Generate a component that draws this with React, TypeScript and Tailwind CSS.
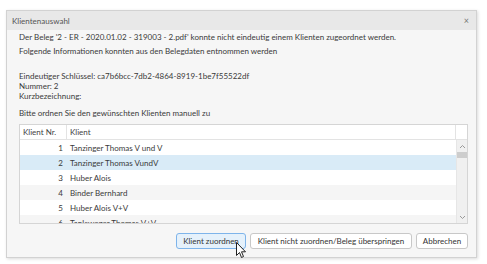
import React from 'react';

const rows = [
  { nr: 1, name: 'Tanzinger Thomas V und V', bg: 'bg-white' },
  { nr: 2, name: 'Tanzinger Thomas VundV', bg: 'bg-[#d9ebf7]' },
  { nr: 3, name: 'Huber Alois', bg: 'bg-white' },
  { nr: 4, name: 'Binder Bernhard', bg: 'bg-[#f5f5f5]' },
  { nr: 5, name: 'Huber Alois V+V', bg: 'bg-white' },
  { nr: 6, name: 'Tanlcweger Thomas V+V', bg: 'bg-[#f5f5f5]' },
];

const App: React.FC = () => {
  return (
    <div className="relative w-[487px] h-[264px] bg-white overflow-hidden font-['Lato',sans-serif] text-[8px] text-[#3a3a3a]">
      <div className="absolute left-[6px] top-[10px] w-[471px] h-[248px] flex flex-col border border-[#d2d2d2] bg-[#f6f6f6] shadow-[1px_1px_3px_rgba(0,0,0,0.15)]">
        {/* title bar */}
        <div className="h-[19px] shrink-0 flex items-center justify-between bg-[#e8e8e8] pl-[5px] pr-[7px] text-[#555]">
          <span>Klientenauswahl</span>
          <span className="text-[9px] text-[#777] leading-none">×</span>
        </div>

        <div className="flex flex-col pl-[12px] pr-[8px] leading-[10px]">
          <div className="mt-[2px] h-[10px]">Der Beleg '2 - ER - 2020.01.02 - 319003 - 2.pdf' konnte nicht eindeutig einem Klienten zugeordnet werden.</div>
          <div className="mt-[4px] h-[10px]">Folgende Informationen konnten aus den Belegdaten entnommen werden</div>
          <div className="mt-[15px] flex flex-col">
            <div className="h-[10px]">Eindeutiger Schlüssel: ca7b6bcc-7db2-4864-8919-1be7f55522df</div>
            <div className="h-[10px]">Nummer: 2</div>
            <div className="h-[10px]">Kurzbezeichnung:</div>
          </div>
          <div className="mt-[7px] h-[10px]">Bitte ordnen Sie den gewünschten Klienten manuell zu</div>

          {/* table */}
          <div className="mt-[6px] h-[100px] border border-[#d5d5d5] bg-white flex flex-col overflow-hidden">
            <div className="h-[15px] shrink-0 flex border-b border-[#e3e3e3] text-[#444]">
              <div className="w-[47px] pl-[3px] flex items-center border-r border-[#e3e3e3]">Klient Nr.</div>
              <div className="flex-1 pl-[3px] flex items-center border-r border-[#e3e3e3]">Klient</div>
              <div className="w-[11px]" />
            </div>
            <div className="flex flex-1 min-h-0">
              <div className="flex-1 flex flex-col overflow-hidden">
                {rows.map((r) => (
                  <div key={r.nr} className={`h-[15px] shrink-0 flex items-center ${r.bg}`}>
                    <div className="w-[47px] pr-[4px] text-right">{r.nr}</div>
                    <div className="pl-[3px]">{r.name}</div>
                  </div>
                ))}
              </div>
              <div className="w-[11px] bg-[#f0f0f0] flex flex-col items-center border-l border-[#e6e6e6]">
                <svg width="7" height="5" viewBox="0 0 7 5" className="mt-[4px]">
                  <path d="M1 4 L3.5 1.5 L6 4" fill="none" stroke="#9a9a9a" strokeWidth="1" />
                </svg>
                <div className="mt-[3px] w-[11px] h-[6px] bg-[#cdcdcd]" />
                <div className="flex-1" />
                <svg width="7" height="5" viewBox="0 0 7 5" className="mb-[3px]">
                  <path d="M1 1 L3.5 3.5 L6 1" fill="none" stroke="#9a9a9a" strokeWidth="1" />
                </svg>
              </div>
            </div>
          </div>

          {/* buttons */}
          <div className="mt-[9px] flex justify-end gap-[4px]">
            <button className="h-[16px] w-[70px] rounded-[3px] border border-[#7eb4ea] bg-[#e5f1fb] text-[#333] leading-none">Klient zuordnen</button>
            <button className="h-[16px] w-[162px] rounded-[3px] border border-[#c8c8c8] bg-white text-[#333] leading-none">Klient nicht zuordnen/Beleg überspringen</button>
            <button className="h-[16px] w-[52px] rounded-[3px] border border-[#c8c8c8] bg-white text-[#333] leading-none">Abbrechen</button>
          </div>
        </div>
      </div>

      {/* mouse cursor */}
      <svg className="absolute left-[236px] top-[242px]" width="12" height="18" viewBox="0 0 12 18">
        <path d="M0.5 0.5 L0.5 13.5 L3.5 10.5 L5.5 15.5 L7.5 14.5 L5.5 9.8 L9.5 9.8 Z" fill="#fff" stroke="#222" strokeWidth="1" strokeLinejoin="round" />
      </svg>
    </div>
  );
};

export default App;
